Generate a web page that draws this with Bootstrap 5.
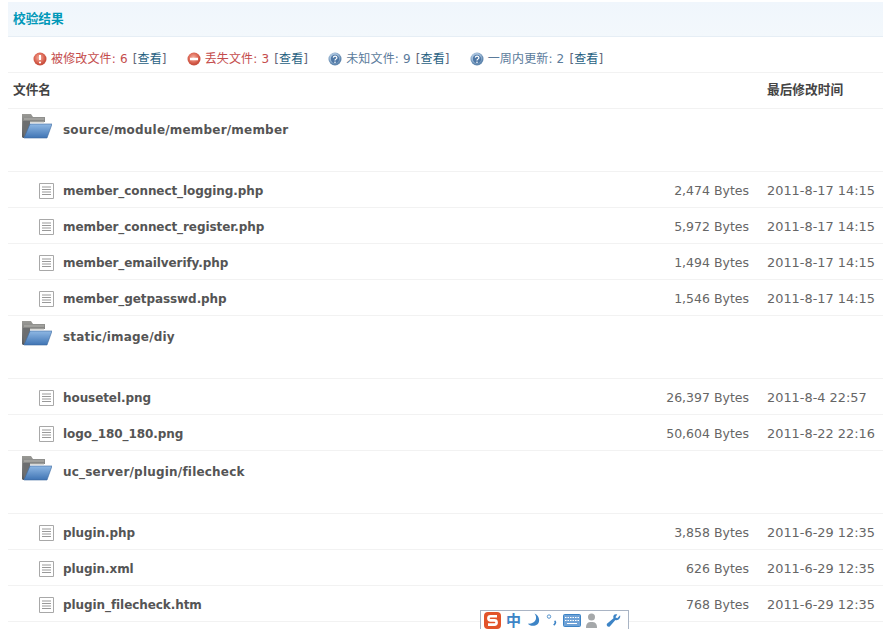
<!DOCTYPE html>
<html lang="zh"><head><meta charset="utf-8"><title>校验结果</title>
<link href="https://cdn.jsdelivr.net/npm/bootstrap@5.3.0/dist/css/bootstrap.min.css" rel="stylesheet">
<style>
html,body{height:629px;overflow:hidden}
body{font:12px/18px "DejaVu Sans","Noto Sans CJK SC",sans-serif;color:#666;background:#fff;padding:2px 0 0 8px;position:relative}
.title-bar{background:linear-gradient(#f0f6fc,#f3f8fc);border-bottom:1px solid #e6eef5;padding:8px 5px 0;color:#0098b8;font-weight:700;font-size:12.7px;line-height:18px;box-sizing:content-box;height:26px}
.stat-row{height:36px;border-bottom:1px solid #f2f2f2;padding-left:25px;gap:20px;align-items:center;padding-top:9px;letter-spacing:.15px}
.stat-item{display:flex;align-items:center;gap:4px}
.warn{color:#c44c4c}.info{color:#5b7b9b}
.stat-row a{color:#1f5f7f;text-decoration:none}
.stat-row i{font-style:normal;color:#667;margin-left:1px}
.file-grid{table-layout:fixed;width:875px;margin:0;--bs-table-color:#666;--bs-table-bg:transparent;--bs-table-border-color:#f2f2f2}
.file-grid td,.file-grid th{padding:0;border-bottom:1px solid #f2f2f2;vertical-align:top;box-shadow:none}
.file-grid th{height:35px;color:#444;font-weight:700;font-size:12.7px;vertical-align:middle;padding-left:5px}
.file-grid .row-f td{height:36px;vertical-align:middle;padding-top:4px}
.file-grid .row-d td{height:63px}
.c-size{text-align:right;color:#666;font-size:12.5px}
.c-date{padding-left:18px!important;color:#666;font-size:12.9px}
.fname{display:flex;align-items:center;color:#555;font-weight:700;font-size:12px;letter-spacing:-.08px}
.row-f .fname{padding-left:31px;gap:9px}
.row-f .fname svg{margin-top:-1px}
.row-d .fname{padding:4px 0 0 13px;gap:11px;align-items:flex-start;font-size:12px;letter-spacing:.2px}
.row-d .fname span{padding-top:8px}
.ime{position:absolute;left:480px;top:610px;width:149px;height:19px;background:#fff;border:1px solid #a9b4c4;border-bottom:0;display:flex;align-items:center;gap:5px;padding:0 0 0 2px}
.ime b{color:#3d84c6;font:700 15px/16px "Noto Sans CJK SC",sans-serif;margin-left:-1px}
</style></head><body>
<svg width="0" height="0" class="position-absolute"><defs>
<radialGradient id="gr" cx=".45" cy=".4"><stop offset="0" stop-color="#f7b3a2"/><stop offset=".7" stop-color="#dd6a58"/><stop offset="1" stop-color="#c9503f"/></radialGradient>
<radialGradient id="gb" cx=".45" cy=".4"><stop offset="0" stop-color="#8fb0d4"/><stop offset=".65" stop-color="#a9c3dd"/><stop offset="1" stop-color="#5f86ae"/></radialGradient>
<linearGradient id="gf" x1="0" y1="0" x2="0" y2="1"><stop offset="0" stop-color="#8fb8e4"/><stop offset="1" stop-color="#3f74b4"/></linearGradient>
<linearGradient id="gd" x1="0" y1="0" x2="0" y2="1"><stop offset="0" stop-color="#9a9a96"/><stop offset="1" stop-color="#55585c"/></linearGradient>
<symbol id="folder" viewBox="0 0 31 27">
<path d="M1 1h9l2 3h12v5H8L3 25H2L1 24z" fill="url(#gd)"/>
<path d="M3 6h20M3 9h20" stroke="#b5b5b0"/>
<path d="M2 8h7v16H3z" fill="#6c6e70"/>
<path d="M9 11h22l-5 14H3z" fill="url(#gf)" stroke="#3d6a9f" stroke-width=".6"/>
</symbol>
<symbol id="file" viewBox="0 0 15 16">
<path d="M.5.5h14v15H.5z" fill="#fff" stroke="#a8a8a8"/>
<path d="M3 4h9M3 6.500h9M3 9h9M3 11.500h9" stroke="#999"/>
</symbol>
<symbol id="ic-w" viewBox="0 0 14 14"><circle cx="7" cy="7" r="6.500" fill="url(#gr)"/><path d="M7 3v5" stroke="#fff" stroke-width="2"/><circle cx="7" cy="10.500" r="1.100" fill="#fff"/></symbol>
<symbol id="ic-m" viewBox="0 0 14 14"><circle cx="7" cy="7" r="6.500" fill="url(#gr)"/><path d="M3 7h8" stroke="#fff" stroke-width="2.500"/></symbol>
<symbol id="ic-q" viewBox="0 0 14 14"><circle cx="7" cy="7" r="6.500" fill="url(#gb)"/><circle cx="7" cy="7" r="4.200" fill="#4f78a6"/><path d="M5.300 5.600a1.800 1.600 0 1 1 2.400 1.700c-.6.300-.7.600-.7 1.200" fill="none" stroke="#fff" stroke-width="1.200"/><circle cx="7" cy="10.200" r=".8" fill="#fff"/></symbol>
</defs></svg>

<div class="title-bar">校验结果</div>
<div class="stat-row d-flex">
<span class="stat-item warn"><svg width="14" height="14"><use href="#ic-w"/></svg><span>被修改文件: 6 <i>[<a href="#">查看</a>]</i></span></span>
<span class="stat-item warn"><svg width="14" height="14"><use href="#ic-m"/></svg><span>丢失文件: 3 <i>[<a href="#">查看</a>]</i></span></span>
<span class="stat-item info"><svg width="14" height="14"><use href="#ic-q"/></svg><span>未知文件: 9 <i>[<a href="#">查看</a>]</i></span></span>
<span class="stat-item info"><svg width="14" height="14"><use href="#ic-q"/></svg><span>一周内更新: 2 <i>[<a href="#">查看</a>]</i></span></span>
</div>
<table class="table file-grid">
<colgroup><col style="width:741px"><col style="width:134px"></colgroup>
<thead><tr><th>文件名</th><th class="c-date">最后修改时间</th></tr></thead>
<tbody>
<tr class="row-d"><td colspan="2"><div class="fname"><svg width="31" height="27"><use href="#folder"/></svg><span>source/module/member/member</span></div></td></tr>
<tr class="row-f"><td><div class="d-flex justify-content-between"><div class="fname"><svg width="15" height="16"><use href="#file"/></svg>member_connect_logging.php</div><div class="c-size">2,474 Bytes</div></div></td><td class="c-date">2011-8-17 14:15</td></tr>
<tr class="row-f"><td><div class="d-flex justify-content-between"><div class="fname"><svg width="15" height="16"><use href="#file"/></svg>member_connect_register.php</div><div class="c-size">5,972 Bytes</div></div></td><td class="c-date">2011-8-17 14:15</td></tr>
<tr class="row-f"><td><div class="d-flex justify-content-between"><div class="fname"><svg width="15" height="16"><use href="#file"/></svg>member_emailverify.php</div><div class="c-size">1,494 Bytes</div></div></td><td class="c-date">2011-8-17 14:15</td></tr>
<tr class="row-f"><td><div class="d-flex justify-content-between"><div class="fname"><svg width="15" height="16"><use href="#file"/></svg>member_getpasswd.php</div><div class="c-size">1,546 Bytes</div></div></td><td class="c-date">2011-8-17 14:15</td></tr>
<tr class="row-d"><td colspan="2"><div class="fname"><svg width="31" height="27"><use href="#folder"/></svg><span>static/image/diy</span></div></td></tr>
<tr class="row-f"><td><div class="d-flex justify-content-between"><div class="fname"><svg width="15" height="16"><use href="#file"/></svg>housetel.png</div><div class="c-size">26,397 Bytes</div></div></td><td class="c-date">2011-8-4 22:57</td></tr>
<tr class="row-f"><td><div class="d-flex justify-content-between"><div class="fname"><svg width="15" height="16"><use href="#file"/></svg>logo_180_180.png</div><div class="c-size">50,604 Bytes</div></div></td><td class="c-date">2011-8-22 22:16</td></tr>
<tr class="row-d"><td colspan="2"><div class="fname"><svg width="31" height="27"><use href="#folder"/></svg><span>uc_server/plugin/filecheck</span></div></td></tr>
<tr class="row-f"><td><div class="d-flex justify-content-between"><div class="fname"><svg width="15" height="16"><use href="#file"/></svg>plugin.php</div><div class="c-size">3,858 Bytes</div></div></td><td class="c-date">2011-6-29 12:35</td></tr>
<tr class="row-f"><td><div class="d-flex justify-content-between"><div class="fname"><svg width="15" height="16"><use href="#file"/></svg>plugin.xml</div><div class="c-size">626 Bytes</div></div></td><td class="c-date">2011-6-29 12:35</td></tr>
<tr class="row-f"><td><div class="d-flex justify-content-between"><div class="fname"><svg width="15" height="16"><use href="#file"/></svg>plugin_filecheck.htm</div><div class="c-size">768 Bytes</div></div></td><td class="c-date">2011-6-29 12:35</td></tr>
</tbody></table>
<div class="ime">
<svg width="19" height="18" viewBox="0 0 19 18"><rect x="1" y="1" width="17" height="17" rx="4" fill="#e2532a"/><path d="M14 5.200H7.500a2 2 0 0 0 0 4.200h4a2 2 0 0 1 0 4.200H5" fill="none" stroke="#fff" stroke-width="2.600"/></svg>
<b>中</b>
<svg width="15" height="16" viewBox="0 0 16 16"><path d="M9 1c3 3 3 11-7 11 2 3 12 4 12-4 0-3-2-6-5-7z" fill="#3d84c6"/></svg>
<svg width="12" height="16" viewBox="0 0 14 16"><circle cx="3.500" cy="4" r="2" fill="none" stroke="#3d84c6"/><path d="M10 9c1.500 1 1.500 3-1 5" stroke="#3d84c6" stroke-width="2" fill="none"/></svg>
<svg width="18" height="13" viewBox="0 0 18 13"><rect x=".5" y=".5" width="17" height="12" rx="1" fill="#6fa2d6" stroke="#3d84c6"/><path d="M2 3.500h14M2 6.500h14" stroke="#fff" stroke-dasharray="1.500 1"/><path d="M4 9.500h10" stroke="#fff"/></svg>
<svg width="11" height="15" viewBox="0 0 11 15"><circle cx="5.500" cy="4" r="3.500" fill="#a5a8aa"/><path d="M0 15c0-5 2-6 5.500-6s5.500 1 5.500 6z" fill="#a5a8aa"/></svg>
<svg width="15" height="15" viewBox="0 0 16 15" class="ms-1"><path d="M15 2l-3 3-2-1 2-3C9 0 7 2 8 5L1 11c-1 2 1 4 3 3l6-7c3 1 6-2 5-5z" fill="#3d84c6"/></svg>
</div>
</body></html>
